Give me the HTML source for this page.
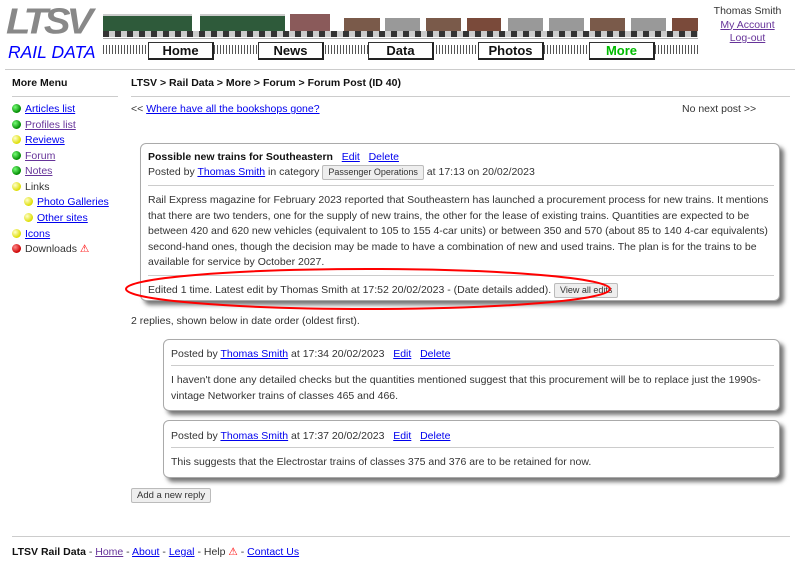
<!DOCTYPE html>
<html><head><meta charset="utf-8"><style>
body{margin:0;width:800px;height:569px;background:#fff;font-family:"Liberation Sans",Arial,sans-serif;font-size:10.5px;color:#333;position:relative;overflow:hidden}
.a{position:absolute;white-space:nowrap}
a{color:#00e;text-decoration:underline}
.hr{position:absolute;height:1px;background:#ccc}
.btn{position:absolute;top:42px;width:63px;height:15px;background:#fff;border:1px solid #333;border-right:2px solid #222;border-bottom:2px solid #222;font-size:13px;font-weight:bold;text-align:center;line-height:15px;color:#111}
.box{position:absolute;border:1px solid #aaa;border-radius:6px;box-shadow:4px 4px 4px #777;background:#fff}
.dot{position:absolute;width:9px;height:9px;border-radius:50%}
.g{background:radial-gradient(circle at 35% 35%,#7f7,#080 70%)}
.y{background:radial-gradient(circle at 35% 35%,#ffc,#dd0 70%)}
.r{background:radial-gradient(circle at 35% 35%,#f88,#c00 70%)}
.tag{display:inline-block;border:1px solid #bbb;background:#eee;border-radius:2px;font-size:9px;padding:1px 5px;line-height:11px}
.w{position:absolute;top:18px;height:15px}
</style></head><body>
<div class="a" style="left:6px;top:4px;font-size:40px;font-weight:bold;font-style:italic;color:#888;letter-spacing:-4px;line-height:40px;transform:scaleY(0.9);transform-origin:top left">LTSV</div>
<div class="a" style="left:8px;top:42px;font-size:17.5px;font-style:italic;color:#00f;line-height:20px">RAIL DATA</div>
<div style="position:absolute;left:103px;top:14px;width:89px;height:16px;background:#2e5a3a;border-top:2px solid #ccc"></div>
<div style="position:absolute;left:200px;top:14px;width:85px;height:16px;background:#2e5a3a;border-top:2px solid #ccc"></div>
<div class="w" style="left:290px;top:14px;width:40px;height:18px;background:#8a5a5a"></div>
<div class="w" style="left:344px;width:36px;background:#7a5a4a"></div>
<div class="w" style="left:385px;width:35px;background:#999"></div>
<div class="w" style="left:426px;width:35px;background:#7a5a4a"></div>
<div class="w" style="left:467px;width:34px;background:#7a4a3a"></div>
<div class="w" style="left:508px;width:35px;background:#999"></div>
<div class="w" style="left:549px;width:35px;background:#999"></div>
<div class="w" style="left:590px;width:35px;background:#7a5a4a"></div>
<div class="w" style="left:631px;width:35px;background:#999"></div>
<div class="w" style="left:672px;width:26px;background:#7a4a3a"></div>
<div style="position:absolute;left:103px;top:31px;width:595px;height:6px;background:repeating-linear-gradient(90deg,#333 0 6px,#ccc 6px 12px)"></div>
<div style="position:absolute;left:103px;top:38px;width:595px;height:1px;background:#aaa"></div>
<div style="position:absolute;left:103px;top:45px;width:595px;height:9px;background:repeating-linear-gradient(90deg,#555 0 1px,#fff 1px 3px)"></div>
<div class="btn" style="left:148px">Home</div>
<div class="btn" style="left:258px">News</div>
<div class="btn" style="left:368px">Data</div>
<div class="btn" style="left:478px">Photos</div>
<div class="btn" style="left:589px;color:#0b0">More</div>
<div class="a" style="left:700px;width:95px;text-align:center;top:5px;line-height:13.5px">Thomas Smith<br><a style="color:#639">My Account</a><br><a style="color:#639">Log-out</a></div>
<div class="hr" style="left:5px;top:69px;width:790px"></div>
<div class="a" style="left:12px;top:77px;font-weight:bold;color:#111">More Menu</div>
<div class="hr" style="left:12px;top:96px;width:106px"></div>
<div class="dot g" style="left:12px;top:104px"></div><a class="a" style="left:25px;top:103px">Articles list</a>
<div class="dot g" style="left:12px;top:120px"></div><a class="a" style="left:25px;top:119px;color:#639">Profiles list</a>
<div class="dot y" style="left:12px;top:135px"></div><a class="a" style="left:25px;top:134px">Reviews</a>
<div class="dot g" style="left:12px;top:151px"></div><a class="a" style="left:25px;top:150px;color:#639">Forum</a>
<div class="dot g" style="left:12px;top:166px"></div><a class="a" style="left:25px;top:165px;color:#639">Notes</a>
<div class="dot y" style="left:12px;top:182px"></div><div class="a" style="left:25px;top:181px">Links</div>
<div class="dot y" style="left:24px;top:197px"></div><a class="a" style="left:37px;top:196px">Photo Galleries</a>
<div class="dot y" style="left:24px;top:213px"></div><a class="a" style="left:37px;top:212px">Other sites</a>
<div class="dot y" style="left:12px;top:229px"></div><a class="a" style="left:25px;top:228px">Icons</a>
<div class="dot r" style="left:12px;top:244px"></div><div class="a" style="left:25px;top:243px">Downloads <span style="color:red">⚠</span></div>
<div class="a" style="left:131px;top:77px;font-weight:bold;color:#111">LTSV &gt; Rail Data &gt; More &gt; Forum &gt; Forum Post (ID 40)</div>
<div class="hr" style="left:131px;top:96px;width:659px"></div>
<div class="a" style="left:131px;top:103px">&lt;&lt; <a>Where have all the bookshops gone?</a></div>
<div class="a" style="left:682px;top:103px">No next post &gt;&gt;</div>
<div class="box" style="left:140px;top:143px;width:638px;height:156px">
<div class="a" style="left:7px;top:7px;color:#111"><b>Possible new trains for Southeastern</b> &nbsp; <a>Edit</a> &nbsp; <a>Delete</a></div>
<div class="a" style="left:7px;top:21px">Posted by <a>Thomas Smith</a> in category <span class="tag">Passenger Operations</span> at 17:13 on 20/02/2023</div>
<div class="hr" style="left:7px;top:41px;width:626px"></div>
<div class="a" style="left:7px;top:49px;line-height:15.5px">Rail Express magazine for February 2023 reported that Southeastern has launched a procurement process for new trains. It mentions<br>that there are two tenders, one for the supply of new trains, the other for the lease of existing trains. Quantities are expected to be<br>between 420 and 620 new vehicles (equivalent to 105 to 155 4-car units) or between 350 and 570 (about 85 to 140 4-car equivalents)<br>second-hand ones, though the decision may be made to have a combination of new and used trains. The plan is for the trains to be<br>available for service by October 2027.</div>
<div class="hr" style="left:7px;top:131px;width:626px"></div>
<div class="a" style="left:7px;top:139px">Edited 1 time. Latest edit by Thomas Smith at 17:52 20/02/2023 - (Date details added). <span class="tag">View all edits</span></div>
</div>
<svg style="position:absolute;left:0;top:0" width="800" height="569"><ellipse cx="368" cy="289" rx="242" ry="20" fill="none" stroke="red" stroke-width="2"/></svg>
<div class="a" style="left:131px;top:315px">2 replies, shown below in date order (oldest first).</div>
<div class="box" style="left:163px;top:339px;width:615px;height:70px">
<div class="a" style="left:7px;top:8px">Posted by <a>Thomas Smith</a> at 17:34 20/02/2023 &nbsp; <a>Edit</a> &nbsp; <a>Delete</a></div>
<div class="hr" style="left:7px;top:25px;width:603px"></div>
<div class="a" style="left:7px;top:33px;line-height:15.5px">I haven't done any detailed checks but the quantities mentioned suggest that this procurement will be to replace just the 1990s-<br>vintage Networker trains of classes 465 and 466.</div>
</div>
<div class="box" style="left:163px;top:420px;width:615px;height:56px">
<div class="a" style="left:7px;top:9px">Posted by <a>Thomas Smith</a> at 17:37 20/02/2023 &nbsp; <a>Edit</a> &nbsp; <a>Delete</a></div>
<div class="hr" style="left:7px;top:26px;width:603px"></div>
<div class="a" style="left:7px;top:35px">This suggests that the Electrostar trains of classes 375 and 376 are to be retained for now.</div>
</div>
<div class="a" style="left:131px;top:488px"><span class="tag" style="font-size:9.5px">Add a new reply</span></div>
<div class="hr" style="left:12px;top:536px;width:778px"></div>
<div class="a" style="left:12px;top:546px"><b style="color:#111">LTSV Rail Data</b> - <a style="color:#639">Home</a> - <a>About</a> - <a>Legal</a> - Help <span style="color:red">⚠</span> - <a>Contact Us</a></div>
</body></html>
